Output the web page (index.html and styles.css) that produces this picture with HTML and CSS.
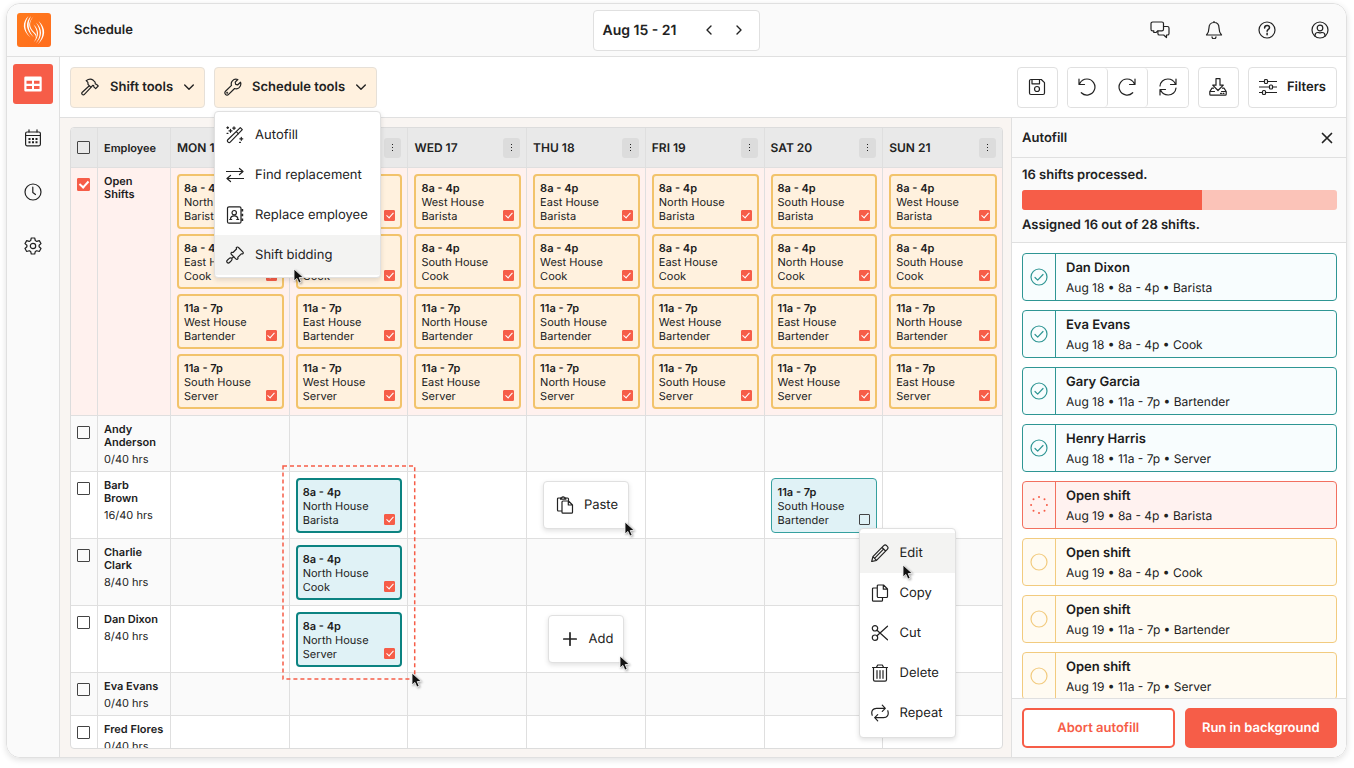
FILE: index.html
```html
<!DOCTYPE html>
<html lang="en">

<head>
  <meta charset="UTF-8">
  <meta name="viewport" content="width=device-width, initial-scale=1.0">
  <title>Schedule</title>
  <link rel="stylesheet" href="styles.css">
</head>

<body>
  <!-- icon sprite -->
  <svg class="sprite" xmlns="http://www.w3.org/2000/svg">
    <symbol id="i-table" viewBox="0 0 18 18">
      <path fill="currentColor" stroke="none" fill-rule="evenodd" d="M1.5 1.5h15a1.2 1.2 0 0 1 1.2 1.2v12.600a1.200 1.200 0 0 1-1.200 1.200h-15A1.200 1.200 0 0 1 .3 15.300V2.700A1.200 1.200 0 0 1 1.500 1.500zM2.500 5.800v3h5.500v-3zM10 5.800v3h5.500v-3zM2.500 11v3h5.500v-3zM10 11v3h5.500v-3z" />
    </symbol>
    <symbol id="i-calendar" viewBox="0 0 18 18">
      <rect x="1.600" y="3" width="14.800" height="13.800" rx="1.500" />
      <path d="M1.600 6.500h14.800M5 .8V3M13 .8V3" />
      <path stroke-width="2" stroke-linecap="butt" stroke-dasharray="2 1.500" d="M4.500 10h9M4.500 13.300h9" />
    </symbol>
    <symbol id="i-clock" viewBox="0 0 18 18">
      <circle cx="9" cy="9" r="8" />
      <path d="M8.800 4.200V9.500l2.700 2" />
    </symbol>
    <symbol id="i-gear" viewBox="0 0 18 18">
      <circle cx="9" cy="9" r="2.700" />
      <path d="M7.300 1h3.400l.6 2.500 1.500.9 2.500-.8 1.700 3-1.900 1.700v1.500l1.900 1.700-1.700 3-2.500-.8-1.500.9-.6 2.400H7.300l-.6-2.400-1.500-.9-2.500.8-1.700-3 1.900-1.700V8.300L1 6.600l1.700-3 2.500.8 1.500-.9z" />
    </symbol>
    <symbol id="i-chat" viewBox="0 0 20 18">
      <path d="M6 11.500l-2.200 0V9.800H2.600A1.600 1.600 0 0 1 1 8.200V2.600A1.600 1.600 0 0 1 2.600 1h9.300a1.600 1.600 0 0 1 1.600 1.600v5.600a1.600 1.600 0 0 1-1.600 1.600H8z" />
      <path d="M13.500 5.500h3.900A1.600 1.600 0 0 1 19 7.100v5.300a1.600 1.600 0 0 1-1.600 1.600H16.500v2.600L13.700 14H9.500a1.600 1.600 0 0 1-1.600-1.600V10" />
    </symbol>
    <symbol id="i-bell" viewBox="0 0 18 18">
      <path d="M9 1.500c3.300 0 5 2.300 5 5.300 0 3.600.8 5.300 2.500 7.200h-15C3.200 12.100 4 10.400 4 6.800c0-3 1.700-5.300 5-5.300zM9 .3v1.200M7 15.800a2 2 0 0 0 4 0" />
    </symbol>
    <symbol id="i-help" viewBox="0 0 18 18">
      <circle cx="9" cy="9" r="8" />
      <path stroke-width="1.500" d="M6.600 7c0-1.500 1-2.500 2.500-2.500s2.400 1 2.400 2.200c0 1.700-2.400 1.800-2.400 3.600M9.100 12.300v1.400" />
    </symbol>
    <symbol id="i-user" viewBox="0 0 18 18">
      <circle cx="9" cy="9" r="8" />
      <circle cx="9" cy="7" r="2.800" />
      <path d="M4 15.200v-.7c0-1.800 1.300-3 2.900-3 .7 0 1.200.4 2.100.4s1.400-.4 2.100-.4c1.600 0 2.900 1.200 2.900 3v.7" />
    </symbol>
    <symbol id="i-hammer" viewBox="0 0 18 18">
      <path d="M8.300 7.700l-7 6.500c-.7.700-.7 1.500-.1 2.200.7.700 1.600.6 2.200-.1l6.600-6.900M8.300 7.700L7 6.300l-.1-1.900L5.200 2.700C7.500.9 10.300.7 12.300 2.300l1.800 1.800.2 1.900 1.300.3L17.200 8l-2.500 2.600-1.900-1.700-.1-1.300-1-.3L10 9.400z" />
    </symbol>
    <symbol id="i-wrench" viewBox="0 0 18 18">
      <path d="M16.500 4.200l-2.700 2.600-2.100-.5-.5-2.100L13.800 1.500C11.800.8 9.700 1.300 8.400 2.800 7.200 4.100 7 5.900 7.500 7.400L1.500 13.300c-.9.900-.9 2.200 0 3.100s2.200.9 3.100 0l6-5.900c1.600.5 3.300.3 4.600-.9 1.500-1.500 2-3.500 1.300-5.400z" />
      <circle cx="3.200" cy="14.700" r=".4" />
    </symbol>
    <symbol id="i-down" viewBox="0 0 12 12">
      <path stroke-width="1.400" d="M1.700 4l4.300 4.300L10.300 4" />
    </symbol>
    <symbol id="i-left" viewBox="0 0 12 12">
      <path stroke-width="1.400" d="M8 2L4 6l4 4" />
    </symbol>
    <symbol id="i-right" viewBox="0 0 12 12">
      <path stroke-width="1.400" d="M4 2l4 4-4 4" />
    </symbol>
    <symbol id="i-wand" viewBox="0 0 18 18">
      <path d="M14.300 1.600l2 2L4.200 16.200a1.400 1.400 0 0 1-2 0l-.4-.4a1.400 1.400 0 0 1 0-2zM10.300 5.700l2.200 2.200" />
      <path d="M4.500 3.300v3M3 4.800h3M8 .8v2.600M6.700 2.100h2.600M1.700.9v1.600M.9 1.700h1.600M15.300 11.300v3M13.800 12.800h3M13.500 16.300h1M1 7.300h1" />
    </symbol>
    <symbol id="i-swap" viewBox="0 0 18 18">
      <path d="M.5 5.500h16.500M13.500 2.500l3.500 3-3.500 3M17.500 12.500H1M4.500 9.500L1 12.500l3.500 3" />
    </symbol>
    <symbol id="i-contact" viewBox="0 0 18 18">
      <rect x="1.500" y=".8" width="13.500" height="16.400" rx="1.500" />
      <circle cx="8.200" cy="6.700" r="2.200" />
      <path d="M4.500 13.500c0-2.600 1.300-3.600 3.700-3.600s3.700 1 3.700 3.600M3.700 13.500h2M10.700 13.500h2" />
      <path stroke-width="1.800" stroke-linecap="butt" d="M16.300 3v2.500M16.300 7.800v2.500M16.300 12.500V15" />
    </symbol>
    <symbol id="i-gavel" viewBox="0 0 18 18">
      <path d="M10.300 1.700c.7-.9 1.500-.9 2.200-.2l4.300 4.300c.7.700.7 1.500-.2 2.200l-1.300-.2-3.500 3.500.2 1.300c-.7.900-1.500.9-2.200.2L5.500 8.500c-.7-.7-.7-1.500.2-2.200l1.300.2L10.500 3z" />
      <path d="M7.700 10.700l-1.800 1.700M5.900 12.400c-1-.8-2-.6-2.900.2L1.300 14.200c-.8.700-.8 1.600-.1 2.300s1.600.7 2.300 0l1.700-1.700c.8-.8 1.100-1.600.7-2.400z" />
    </symbol>
    <symbol id="i-save" viewBox="0 0 18 18">
      <path d="M1.500 3A1.500 1.500 0 0 1 3 1.500h10.300l3.200 3.200V15a1.500 1.500 0 0 1-1.500 1.500H3A1.500 1.500 0 0 1 1.500 15zM4 1.500v4.300h7.500V1.500" />
      <circle cx="9" cy="11" r="2.500" />
    </symbol>
    <symbol id="i-undo" viewBox="0 0 18 18">
      <path d="M1 1v5.500h5.500M1.500 6C3 2.800 5.800 1 9 1a8 8 0 1 1-5.700 13.700" />
    </symbol>
    <symbol id="i-redo" viewBox="0 0 18 18">
      <path d="M17 1v5.500h-5.500M16.500 6C15 2.800 12.200 1 9 1a8 8 0 1 0 5.700 13.700" />
    </symbol>
    <symbol id="i-refresh" viewBox="0 0 18 18">
      <path d="M17 1v5.500h-5.500M1 8C1.300 4 4.600 1 8.800 1c3.300 0 6.200 1.900 7.600 5M1 17v-5.500h5.500M17 10c-.3 4-3.600 7-7.800 7-3.300 0-6.200-1.900-7.600-5" />
    </symbol>
    <symbol id="i-download" viewBox="0 0 18 18">
      <path d="M7 .7h4v6.500h3.300L9 12.500 3.700 7.200H7zM4.500 10.200H3L.8 13.500v2.700c0 .6.400 1 1 1h14.400c.6 0 1-.4 1-1v-2.700L15 10.200h-1.500M.8 13.500H5.500M12.500 13.500h4.700M11.500 15.300h1M14 15.300h1" />
    </symbol>
    <symbol id="i-filters" viewBox="0 0 18 18">
      <path d="M.5 3.500h5M8.500 3.500h9M.5 9h10M13.500 9h4M.5 14.500h3M6.500 14.500h11" />
      <rect x="5.500" y="1.500" width="3" height="4" rx="1" />
      <rect x="10.500" y="7" width="3" height="4" rx="1" />
      <rect x="3.500" y="12.500" width="3" height="4" rx="1" />
    </symbol>
    <symbol id="i-close" viewBox="0 0 18 18">
      <path stroke-width="1.700" d="M4.500 4.500l9 9M13.500 4.500l-9 9" />
    </symbol>
    <symbol id="i-paste" viewBox="0 0 18 18">
      <path d="M6 15H2.500a1 1 0 0 1-1-1V3a1 1 0 0 1 1-1H4.500M10 2h1.500a1 1 0 0 1 1 1v1M4.500 3.200v-1.400h1.200a1.500 1.500 0 0 1 2.800 0h1.300v1.400zM7 5h5.500L16.500 9v7.200a1 1 0 0 1-1 1H7a1 1 0 0 1-1-1V6a1 1 0 0 1 1-1zM12.300 5v4h4" />
    </symbol>
    <symbol id="i-plus" viewBox="0 0 18 18">
      <path stroke-width="1.700" d="M9 2.800v12.400M2.800 9h12.400" />
    </symbol>
    <symbol id="i-pencil" viewBox="0 0 18 18">
      <path d="M12.700 1.700c1-1 2-.9 2.900 0l.7.700c.9.900 1 1.900 0 2.900L5.500 16.300l-4.800 1.200 1.200-4.800zM11 3.500L14.600 7M1.900 12.700l3.600 3.600M12.500 5.200L4 13.800" />
    </symbol>
    <symbol id="i-copy" viewBox="0 0 18 18">
      <path d="M7.300 1H12.500l4 4v7.500a1 1 0 0 1-1 1H7.300a1 1 0 0 1-1-1V2a1 1 0 0 1 1-1zM12.300 1v4.200h4.200M6.300 4H2.500a1 1 0 0 0-1 1v11.200a1 1 0 0 0 1 1h8a1 1 0 0 0 1-1V13.500" />
    </symbol>
    <symbol id="i-cut" viewBox="0 0 18 18">
      <circle cx="4" cy="4.300" r="2.700" />
      <circle cx="4" cy="13.700" r="2.700" />
      <path d="M6 6.200L16.500 15.800M6 11.800L16.500 2.200" />
    </symbol>
    <symbol id="i-trash" viewBox="0 0 18 18">
      <path d="M1.500 3.500h15M2.500 3.500v12.200c0 .8.600 1.400 1.400 1.400h10.200c.8 0 1.400-.6 1.400-1.400V3.500M5.500 3.300l1.200-2.300h4.600l1.200 2.300M6 6.500v7.800M9 6.500v7.800M12 6.500v7.800" />
    </symbol>
    <symbol id="i-repeat" viewBox="0 0 18 18">
      <path d="M1.200 11.300C-.2 7 2 4.300 5.500 4.300h8.200M11.300 1.200l3 3.100-3 3.100M16.800 6.700c1.400 4.300-.8 7-4.300 7H4.300M6.700 10.600l-3 3.100 3 3.100" />
    </symbol>
    <symbol id="i-done" viewBox="0 0 18 18">
      <circle cx="9" cy="9" r="8" />
      <path d="M5 9.500l2.700 2.700L13 6.500" />
    </symbol>
    <symbol id="i-wait" viewBox="0 0 18 18">
      <circle cx="9" cy="9" r="8" />
    </symbol>
    <symbol id="i-busy" viewBox="0 0 18 18">
      <path stroke="#f65d48" stroke-width="2" d="M9 1h.01M14.500 3.300h.01M16.900 9h.01M14.500 14.700h.01M9 17h.01M3.500 14.700h.01M1.100 9h.01M3.500 3.300h.01" />
    </symbol>
    <symbol id="i-cursor" viewBox="0 0 12 17">
      <path fill="#111" stroke="#fff" stroke-width=".8" d="M1 1v12l2.900-2.600 2 4.700 2.300-1-2-4.500 4-.3z" />
    </symbol>
  </svg>

  <div class="app">
    <header class="header">
      <div class="brand">
        <svg class="logo" viewBox="0 0 34 34" aria-hidden="true">
          <defs>
            <linearGradient id="flame" x1="0" y1="0" x2="1" y2="1">
              <stop offset="0" stop-color="#ff7a1c" />
              <stop offset="1" stop-color="#ff6d1e" />
            </linearGradient>
          </defs>
          <rect width="34" height="34" rx="3" fill="url(#flame)" />
          <g fill="#fff">
            <path d="M11.500 3C5 9 5 17.500 13.500 24.500 7 17.500 7 10 11.500 3z" />
            <path d="M14 3C8 9.500 8.500 17 17 24.500 10.500 17 10.500 10 14 3z" />
            <path d="M16.500 3.500C11.500 9.500 12 14.500 18 20c1.500 1.500 1.800 3.500.8 5.500.3-2-.2-3.500-1.800-5C10.500 14.500 11 9 16.500 3.500z" />
            <path d="M16.500 11.500C22.500 17 22.500 23.500 16.500 29.500 21 23.500 21 18 16.500 11.500z" />
            <path d="M19 9.500C25.800 16 25.800 24 18.500 30.500 24 24 24 17 19 9.500z" />
            <path d="M21.500 8C29.500 15 29 24.500 20.500 31.500 27 24 27 16 21.500 8z" />
          </g>
        </svg>
        <h1 class="title">Schedule</h1>
      </div>
      <div class="week">
        <span class="week-label">Aug 15 - 21</span>
        <button class="week-btn" aria-label="Previous week"><svg class="icon small"><use href="#i-left" /></svg></button>
        <button class="week-btn" aria-label="Next week"><svg class="icon small"><use href="#i-right" /></svg></button>
      </div>
      <div class="account">
        <button class="icon-btn" aria-label="Messages"><svg class="icon wide"><use href="#i-chat" /></svg></button>
        <button class="icon-btn" aria-label="Notifications"><svg class="icon"><use href="#i-bell" /></svg></button>
        <button class="icon-btn" aria-label="Help"><svg class="icon"><use href="#i-help" /></svg></button>
        <button class="icon-btn" aria-label="Profile"><svg class="icon"><use href="#i-user" /></svg></button>
      </div>
    </header>

    <nav class="sidebar">
      <a href="#" class="side-link active" aria-label="Schedule"><svg class="icon"><use href="#i-table" /></svg></a>
      <a href="#" class="side-link" aria-label="Calendar"><svg class="icon"><use href="#i-calendar" /></svg></a>
      <a href="#" class="side-link" aria-label="Time"><svg class="icon"><use href="#i-clock" /></svg></a>
      <a href="#" class="side-link" aria-label="Settings"><svg class="icon"><use href="#i-gear" /></svg></a>
    </nav>

    <div class="toolbar">
      <button class="tool warm"><svg class="icon wide"><use href="#i-hammer" /></svg>Shift tools<svg class="icon small"><use href="#i-down" /></svg></button>
      <div class="dropdown">
        <button class="tool warm"><svg class="icon"><use href="#i-wrench" /></svg>Schedule tools<svg class="icon small"><use href="#i-down" /></svg></button>
        <div class="menu tools-menu">
          <button class="menu-item"><svg class="icon"><use href="#i-wand" /></svg>Autofill</button>
          <button class="menu-item"><svg class="icon"><use href="#i-swap" /></svg>Find replacement</button>
          <button class="menu-item"><svg class="icon"><use href="#i-contact" /></svg>Replace employee</button>
          <button class="menu-item hover"><svg class="icon"><use href="#i-gavel" /></svg>Shift bidding</button>
          <svg class="cursor"><use href="#i-cursor" /></svg>
        </div>
      </div>
      <div class="tools-right">
        <button class="tool square" aria-label="Save"><svg class="icon"><use href="#i-save" /></svg></button>
        <div class="tool-group">
          <button class="tool square" aria-label="Undo"><svg class="icon"><use href="#i-undo" /></svg></button>
          <button class="tool square" aria-label="Redo"><svg class="icon"><use href="#i-redo" /></svg></button>
          <button class="tool square" aria-label="Refresh"><svg class="icon"><use href="#i-refresh" /></svg></button>
        </div>
        <button class="tool square" aria-label="Download"><svg class="icon"><use href="#i-download" /></svg></button>
        <button class="tool filters"><svg class="icon"><use href="#i-filters" /></svg>Filters</button>
      </div>
    </div>

    <main class="board">
      <div class="grid-wrap">
        <table class="grid">
          <colgroup>
            <col class="col-check">
            <col class="col-name">
            <col span="7">
          </colgroup>
          <thead>
            <tr class="days">
              <th class="check"><input type="checkbox" aria-label="Select all"></th>
              <th class="who-head">Employee</th>
            </tr>
          </thead>
          <tbody>
            <tr class="open-row">
              <td class="check"><input type="checkbox" checked aria-label="Select open shifts"></td>
              <td class="who"><b>Open Shifts</b></td>
            </tr>
            <tr>
              <td class="check"><input type="checkbox" aria-label="Select Andy Anderson"></td>
              <td class="who"><b>Andy Anderson</b><span>0/40 hrs</span></td>
              <td></td><td></td><td></td><td></td><td></td><td></td><td></td>
            </tr>
            <tr>
              <td class="check"><input type="checkbox" aria-label="Select Barb Brown"></td>
              <td class="who"><b>Barb Brown</b><span>16/40 hrs</span></td>
              <td></td>
              <td class="anchor">
                <div class="card taken">
                  <p><b>8a - 4p</b><br>North House<br>Barista</p>
                  <input type="checkbox" checked aria-label="Select shift">
                </div>
                <div class="selection">
                  <svg class="marquee"><rect width="100%" height="100%" /></svg>
                  <svg class="cursor"><use href="#i-cursor" /></svg>
                </div>
              </td>
              <td></td>
              <td class="pop-cell">
                <div class="pop">
                  <button class="pop-btn"><svg class="icon"><use href="#i-paste" /></svg>Paste</button>
                  <svg class="cursor"><use href="#i-cursor" /></svg>
                </div>
              </td>
              <td></td>
              <td class="anchor">
                <div class="card taken thin">
                  <p><b>11a - 7p</b><br>South House<br>Bartender</p>
                  <input type="checkbox" aria-label="Select shift">
                </div>
                <div class="menu card-menu">
                  <button class="menu-item hover"><svg class="icon"><use href="#i-pencil" /></svg>Edit</button>
                  <button class="menu-item"><svg class="icon"><use href="#i-copy" /></svg>Copy</button>
                  <button class="menu-item"><svg class="icon"><use href="#i-cut" /></svg>Cut</button>
                  <button class="menu-item"><svg class="icon"><use href="#i-trash" /></svg>Delete</button>
                  <button class="menu-item"><svg class="icon"><use href="#i-repeat" /></svg>Repeat</button>
                  <svg class="cursor"><use href="#i-cursor" /></svg>
                </div>
              </td>
              <td></td>
            </tr>
            <tr>
              <td class="check"><input type="checkbox" aria-label="Select Charlie Clark"></td>
              <td class="who"><b>Charlie Clark</b><span>8/40 hrs</span></td>
              <td></td>
              <td>
                <div class="card taken">
                  <p><b>8a - 4p</b><br>North House<br>Cook</p>
                  <input type="checkbox" checked aria-label="Select shift">
                </div>
              </td>
              <td></td><td></td><td></td><td></td><td></td>
            </tr>
            <tr>
              <td class="check"><input type="checkbox" aria-label="Select Dan Dixon"></td>
              <td class="who"><b>Dan Dixon</b><span>8/40 hrs</span></td>
              <td></td>
              <td>
                <div class="card taken">
                  <p><b>8a - 4p</b><br>North House<br>Server</p>
                  <input type="checkbox" checked aria-label="Select shift">
                </div>
              </td>
              <td></td>
              <td class="pop-cell">
                <div class="pop">
                  <button class="pop-btn"><svg class="icon"><use href="#i-plus" /></svg>Add</button>
                  <svg class="cursor"><use href="#i-cursor" /></svg>
                </div>
              </td>
              <td></td><td></td><td></td>
            </tr>
            <tr>
              <td class="check"><input type="checkbox" aria-label="Select Eva Evans"></td>
              <td class="who"><b>Eva Evans</b><span>0/40 hrs</span></td>
              <td></td><td></td><td></td><td></td><td></td><td></td><td></td>
            </tr>
            <tr>
              <td class="check"><input type="checkbox" aria-label="Select Fred Flores"></td>
              <td class="who"><b>Fred Flores</b><span>0/40 hrs</span></td>
              <td></td><td></td><td></td><td></td><td></td><td></td><td></td>
            </tr>
          </tbody>
        </table>
      </div>
    </main>

    <aside class="panel">
      <div class="panel-head">
        <h2>Autofill</h2>
        <button class="close" aria-label="Close"><svg class="icon"><use href="#i-close" /></svg></button>
      </div>
      <div class="status">
        <label for="bar">16 shifts processed.</label>
        <progress id="bar" value="16" max="28"></progress>
        <p>Assigned 16 out of 28 shifts.</p>
      </div>
      <ul class="results"></ul>
      <div class="actions">
        <button class="action outline">Abort autofill</button>
        <button class="action solid">Run in background</button>
      </div>
    </aside>
  </div>

  <script>
    const days = ['MON 15', 'TUE 16', 'WED 17', 'THU 18', 'FRI 19', 'SAT 20', 'SUN 21']
    const jobs = [
      ['8a - 4p', 'Barista'],
      ['8a - 4p', 'Cook'],
      ['11a - 7p', 'Bartender'],
      ['11a - 7p', 'Server']
    ]
    // house of each open shift, one row per day
    const houses = [
      ['North', 'East', 'West', 'South'],
      ['South', 'North', 'East', 'West'],
      ['West', 'South', 'North', 'East'],
      ['East', 'West', 'South', 'North'],
      ['North', 'East', 'West', 'South'],
      ['South', 'North', 'East', 'West'],
      ['West', 'South', 'North', 'East']
    ]
    const headRow = document.querySelector('.days')
    const openRow = document.querySelector('.open-row')
    days.forEach((day, i) => {
      headRow.insertAdjacentHTML('beforeend', `
        <th><div class="day">${day}<button class="more" aria-label="${day} options"></button></div></th>`)
      const cards = jobs.map(([time, role], j) => `
        <div class="card open">
          <p><b>${time}</b><br>${houses[i][j]} House<br>${role}</p>
          <input type="checkbox" checked aria-label="Select shift">
        </div>`).join('')
      openRow.insertAdjacentHTML('beforeend', `<td><div class="stack">${cards}</div></td>`)
    })

    const results = [
      ['done', 'Dan Dixon', 'Aug 18 • 8a - 4p • Barista'],
      ['done', 'Eva Evans', 'Aug 18 • 8a - 4p • Cook'],
      ['done', 'Gary Garcia', 'Aug 18 • 11a - 7p • Bartender'],
      ['done', 'Henry Harris', 'Aug 18 • 11a - 7p • Server'],
      ['busy', 'Open shift', 'Aug 19 • 8a - 4p • Barista'],
      ['wait', 'Open shift', 'Aug 19 • 8a - 4p • Cook'],
      ['wait', 'Open shift', 'Aug 19 • 11a - 7p • Bartender'],
      ['wait', 'Open shift', 'Aug 19 • 11a - 7p • Server']
    ]
    document.querySelector('.results').innerHTML = results.map(([state, name, info]) => `
      <li class="result ${state}">
        <div class="state"><svg class="icon"><use href="#i-${state}" /></svg></div>
        <div class="info"><b>${name}</b><span>${info}</span></div>
      </li>`).join('')
  </script>
</body>

</html>
```
FILE: styles.css
```css
* {
  box-sizing: border-box;
}

body {
  margin: 0;
  height: 100vh;
  padding: 3px 7px 10px 6px;
  background-color: #fff;
  font-family: Inter, "Liberation Sans", sans-serif;
  font-size: 13px;
  text-rendering: geometricPrecision;
  color: #222;
}

h1, h2, p, ul {
  margin: 0;
  padding: 0;
}

b {
  font-weight: 600;
  color: #1c1c1c;
}

button {
  font: inherit;
  color: inherit;
  text-rendering: inherit;
  background: none;
  border: none;
  padding: 0;
  cursor: pointer;
}

.sprite {
  display: none;
}

.icon {
  width: 18px;
  height: 18px;
  flex: none;
  fill: none;
  stroke: currentColor;
  stroke-width: 1.2;
  stroke-linecap: round;
  stroke-linejoin: round;
}

.icon.wide {
  width: 20px;
}

.icon.small {
  width: 12px;
  height: 12px;
}

.app {
  height: 100%;
  display: grid;
  grid-template-columns: 53px minmax(0, 1fr) 335px;
  grid-template-rows: 53px 61px minmax(0, 1fr);
  border: 1px solid #e0e0e0;
  border-radius: 14px;
  box-shadow: 0 2px 6px rgba(0, 0, 0, 0.12);
}

/* header */
.header {
  grid-column: 1 / -1;
  display: grid;
  grid-template-columns: 1fr auto 1fr;
  align-items: center;
  padding: 0 10px;
  background-color: #fafafa;
  border-bottom: 1px solid #e0e0e0;
  border-radius: 14px 14px 0 0;
}

.brand {
  display: flex;
  align-items: center;
  gap: 23px;
}

.logo {
  width: 34px;
  height: 34px;
}

.title {
  font-size: 13px;
  font-weight: 600;
}

.week {
  display: flex;
  align-items: center;
  height: 41px;
  padding: 0 5px 0 9px;
  background-color: #fff;
  border: 1px solid #e0e0e0;
  border-radius: 4px;
}

.week-label {
  font-size: 14px;
  font-weight: 600;
  margin-right: 18px;
}

.week-btn {
  display: flex;
  width: 30px;
  justify-content: center;
}

.account {
  display: flex;
  justify-content: flex-end;
  gap: 35px;
  padding-right: 7px;
}

.icon-btn {
  display: flex;
}

/* sidebar */
.sidebar {
  grid-row: 2 / 4;
  display: flex;
  flex-direction: column;
  gap: 14px;
  padding: 7px 6px;
  background-color: #fafafa;
  border-right: 1px solid #e0e0e0;
  border-radius: 0 0 0 14px;
}

.side-link {
  display: flex;
  align-items: center;
  justify-content: center;
  height: 40px;
  color: #222;
  border-radius: 3px;
}

.side-link.active {
  color: #fff;
  background-color: #f65d48;
}

/* toolbar */
.toolbar {
  grid-column: 2 / 4;
  display: flex;
  align-items: center;
  gap: 9px;
  padding: 0 9px 0 10px;
  background-color: #fff;
  border-bottom: 1px solid #e0e0e0;
}

.tool {
  display: flex;
  align-items: center;
  gap: 10px;
  height: 41px;
  padding: 0 9px;
  font-weight: 600;
  background-color: #fff;
  border: 1px solid #e0e0e0;
  border-radius: 4px;
}

.warm {
  background-color: #fff1df;
  border-color: #e6e0d8;
}

.dropdown {
  position: relative;
}

.tools-right {
  display: flex;
  gap: 9px;
  margin-left: auto;
}

.square {
  width: 41px;
  padding: 0;
  justify-content: center;
}

.filters {
  padding: 0 10px;
}

.tool-group {
  display: flex;
  border: 1px solid #e0e0e0;
  border-radius: 4px;
}

.tool-group .square {
  width: 40px;
  height: 39px;
  border-width: 0 1px 0 0;
}

.tool-group .square:last-child {
  border: none;
}

/* menus */
.menu {
  position: absolute;
  z-index: 5;
  padding: 3px 0 2px;
  background-color: #fff;
  border: 1px solid #e0e0e0;
  border-radius: 4px;
  box-shadow: 0 2px 5px rgba(0, 0, 0, 0.12);
}

.menu-item {
  display: flex;
  align-items: center;
  gap: 11px;
  width: 100%;
  height: 40px;
  padding: 0 12px 0 11px;
  white-space: nowrap;
}

.menu-item.hover {
  background-color: #f3f3f2;
}

.tools-menu {
  top: 44px;
  left: 0;
}

.card-menu {
  top: 56px;
  left: 94px;
  padding: 4px 0;
}

.cursor {
  position: absolute;
  width: 12px;
  height: 17px;
  filter: drop-shadow(1px 1px 1px rgba(0, 0, 0, 0.35));
}

.tools-menu .cursor {
  left: 78px;
  bottom: -8px;
}

.card-menu .cursor {
  left: 42px;
  top: 35px;
}

/* schedule table */
.board {
  padding: 9px 8px 8px 10px;
  min-width: 0;
  background-color: #f9f5f2;
}

.grid-wrap {
  height: 100%;
  overflow: hidden;
  background-color: #fff;
  border: 1px solid #dcdcdc;
  border-radius: 4px;
}

.grid {
  width: 100%;
  table-layout: fixed;
  border-spacing: 0;
}

.col-check {
  width: 27px;
}

.col-name {
  width: 73px;
}

.grid th,
.grid td {
  border-right: 1px solid #dfdfdf;
  border-bottom: 1px solid #dfdfdf;
}

.grid th:last-child,
.grid td:last-child {
  border-right: none;
}

.grid th {
  height: 40px;
  padding: 0 6px;
  font-size: 12px;
  font-weight: 600;
  text-align: left;
  background-color: #e9e9e9;
}

.grid .who-head {
  font-size: 11px;
}

.grid td {
  padding: 6px 5px 5px 6px;
  vertical-align: top;
}

.grid tr:nth-child(even) td {
  background-color: #fafafa;
}

.grid .open-row td {
  background-color: #fff1ee;
  padding-bottom: 6px;
}

.grid .check {
  padding: 10px 0 0 6px;
}

.grid th.check {
  padding-top: 0;
}

.grid .who {
  padding: 7px 6px 5px;
}

.grid .anchor {
  position: relative;
}

.who b {
  display: block;
  font-size: 11px;
  line-height: 13px;
}

.who span {
  display: block;
  margin-top: 3px;
  font-size: 11px;
  line-height: 14px;
}

.day {
  display: flex;
  align-items: center;
  justify-content: space-between;
}

.more {
  display: flex;
  align-items: center;
  justify-content: center;
  width: 17px;
  height: 20px;
  border-radius: 3px;
  background-color: #dcdcdc;
}

/* three dots */
.more::before {
  content: "";
  width: 1px;
  height: 7px;
  background: repeating-linear-gradient(#222 0 1px, #dcdcdc 1px 3px);
}

input[type="checkbox"] {
  appearance: none;
  display: block;
  flex: none;
  width: 13px;
  height: 13px;
  margin: 0;
  border: 1px solid #444;
  border-radius: 1px;
}

input[type="checkbox"]:checked {
  background-color: #f65d48;
  border-color: #f65d48;
}

input[type="checkbox"]:checked::before {
  content: "";
  display: block;
  width: 4px;
  height: 7px;
  margin: 0 auto;
  border: solid #fff;
  border-width: 0 2px 2px 0;
  transform: rotate(42deg);
}

.stack {
  display: flex;
  flex-direction: column;
  gap: 5px;
}

.card {
  display: flex;
  justify-content: space-between;
  align-items: flex-end;
  height: 55px;
  padding: 5px 5px 6px;
  font-size: 11px;
  line-height: 14px;
  border: 2px solid;
  border-radius: 4px;
}

.card p {
  align-self: flex-start;
  white-space: nowrap;
}

.card input[type="checkbox"] {
  width: 11px;
  height: 11px;
}

.card input[type="checkbox"]:checked::before {
  width: 3px;
  height: 6px;
  border-width: 0 1px 1px 0;
}

.card.open {
  background-color: #fff1de;
  border-color: #f2c36b;
}

.card.taken {
  background-color: #e0f2f6;
  border-color: #0c8381;
}

.card.thin {
  padding: 6px 6px 7px;
  border-width: 1px;
  border-color: #35a09f;
}

.selection {
  position: absolute;
  z-index: 2;
  top: -6px;
  left: -7px;
  right: -7px;
  height: 213px;
  pointer-events: none;
}

.marquee {
  display: block;
  width: 100%;
  height: 100%;
  overflow: visible;
  fill: none;
  stroke: #f65d48;
  stroke-width: 1.5;
  stroke-dasharray: 4 3;
}

.selection .cursor {
  right: -9px;
  bottom: -10px;
}

.grid .pop-cell {
  padding: 0;
  vertical-align: middle;
}

.pop {
  position: relative;
  width: fit-content;
  margin: auto;
}

.pop-btn {
  display: flex;
  align-items: center;
  gap: 10px;
  height: 48px;
  padding: 0 10px 0 12px;
  background-color: #fff;
  border: 1px solid #e0e0e0;
  border-radius: 4px;
  box-shadow: 0 2px 5px rgba(0, 0, 0, 0.12);
}

.pop .cursor {
  right: -7px;
  bottom: -9px;
}

/* autofill panel */
.panel {
  display: flex;
  flex-direction: column;
  min-height: 0;
  background-color: #fff;
  border-left: 1px solid #e0e0e0;
  border-radius: 0 0 14px 0;
}

.panel-head {
  display: flex;
  align-items: center;
  justify-content: space-between;
  height: 40px;
  padding: 0 10px;
  background-color: #fafafa;
  border-bottom: 1px solid #e0e0e0;
}

.panel-head h2 {
  font-size: 13px;
  font-weight: 600;
}

.close {
  display: flex;
}

.status {
  display: flex;
  flex-direction: column;
  gap: 5px;
  padding: 7px 9px 7px 10px;
  line-height: 20px;
  font-weight: 600;
  background-color: #fafafa;
  border-bottom: 1px solid #e0e0e0;
}

progress {
  appearance: none;
  display: block;
  width: 100%;
  height: 20px;
  border: none;
  border-radius: 3px;
  overflow: hidden;
}

progress::-webkit-progress-bar {
  background-color: #fbc3b8;
}

progress::-webkit-progress-value {
  background-color: #f65d48;
}

.results {
  flex: 1;
  min-height: 0;
  overflow: hidden;
  padding: 10px 9px 0 10px;
  list-style: none;
}

.result {
  display: flex;
  height: 48px;
  margin-bottom: 9px;
  border: 1px solid;
  border-radius: 4px;
}

.state {
  display: flex;
  align-items: center;
  justify-content: center;
  width: 33px;
  border-right: 1px solid;
}

.info {
  padding: 5px 10px;
}

.info b,
.info span {
  display: block;
  line-height: 19px;
}

.info span {
  font-size: 12px;
  color: #222;
}

.done {
  color: #2f9694;
  background-color: #f8fdfe;
}

.busy {
  color: #f2705f;
  background-color: #fff2f0;
}

.wait {
  color: #f2cb7f;
  background-color: #fffbf2;
}

.actions {
  display: flex;
  gap: 10px;
  padding: 9px 9px 9px 10px;
  background-color: #fafafa;
  border-top: 1px solid #e0e0e0;
  border-radius: 0 0 14px 0;
}

.action {
  flex: 1;
  height: 40px;
  font-weight: 600;
  border: 2px solid #f65d48;
  border-radius: 5px;
}

.outline {
  color: #f65d48;
  background-color: #fff;
}

.solid {
  color: #fff;
  background-color: #f65d48;
}
```
